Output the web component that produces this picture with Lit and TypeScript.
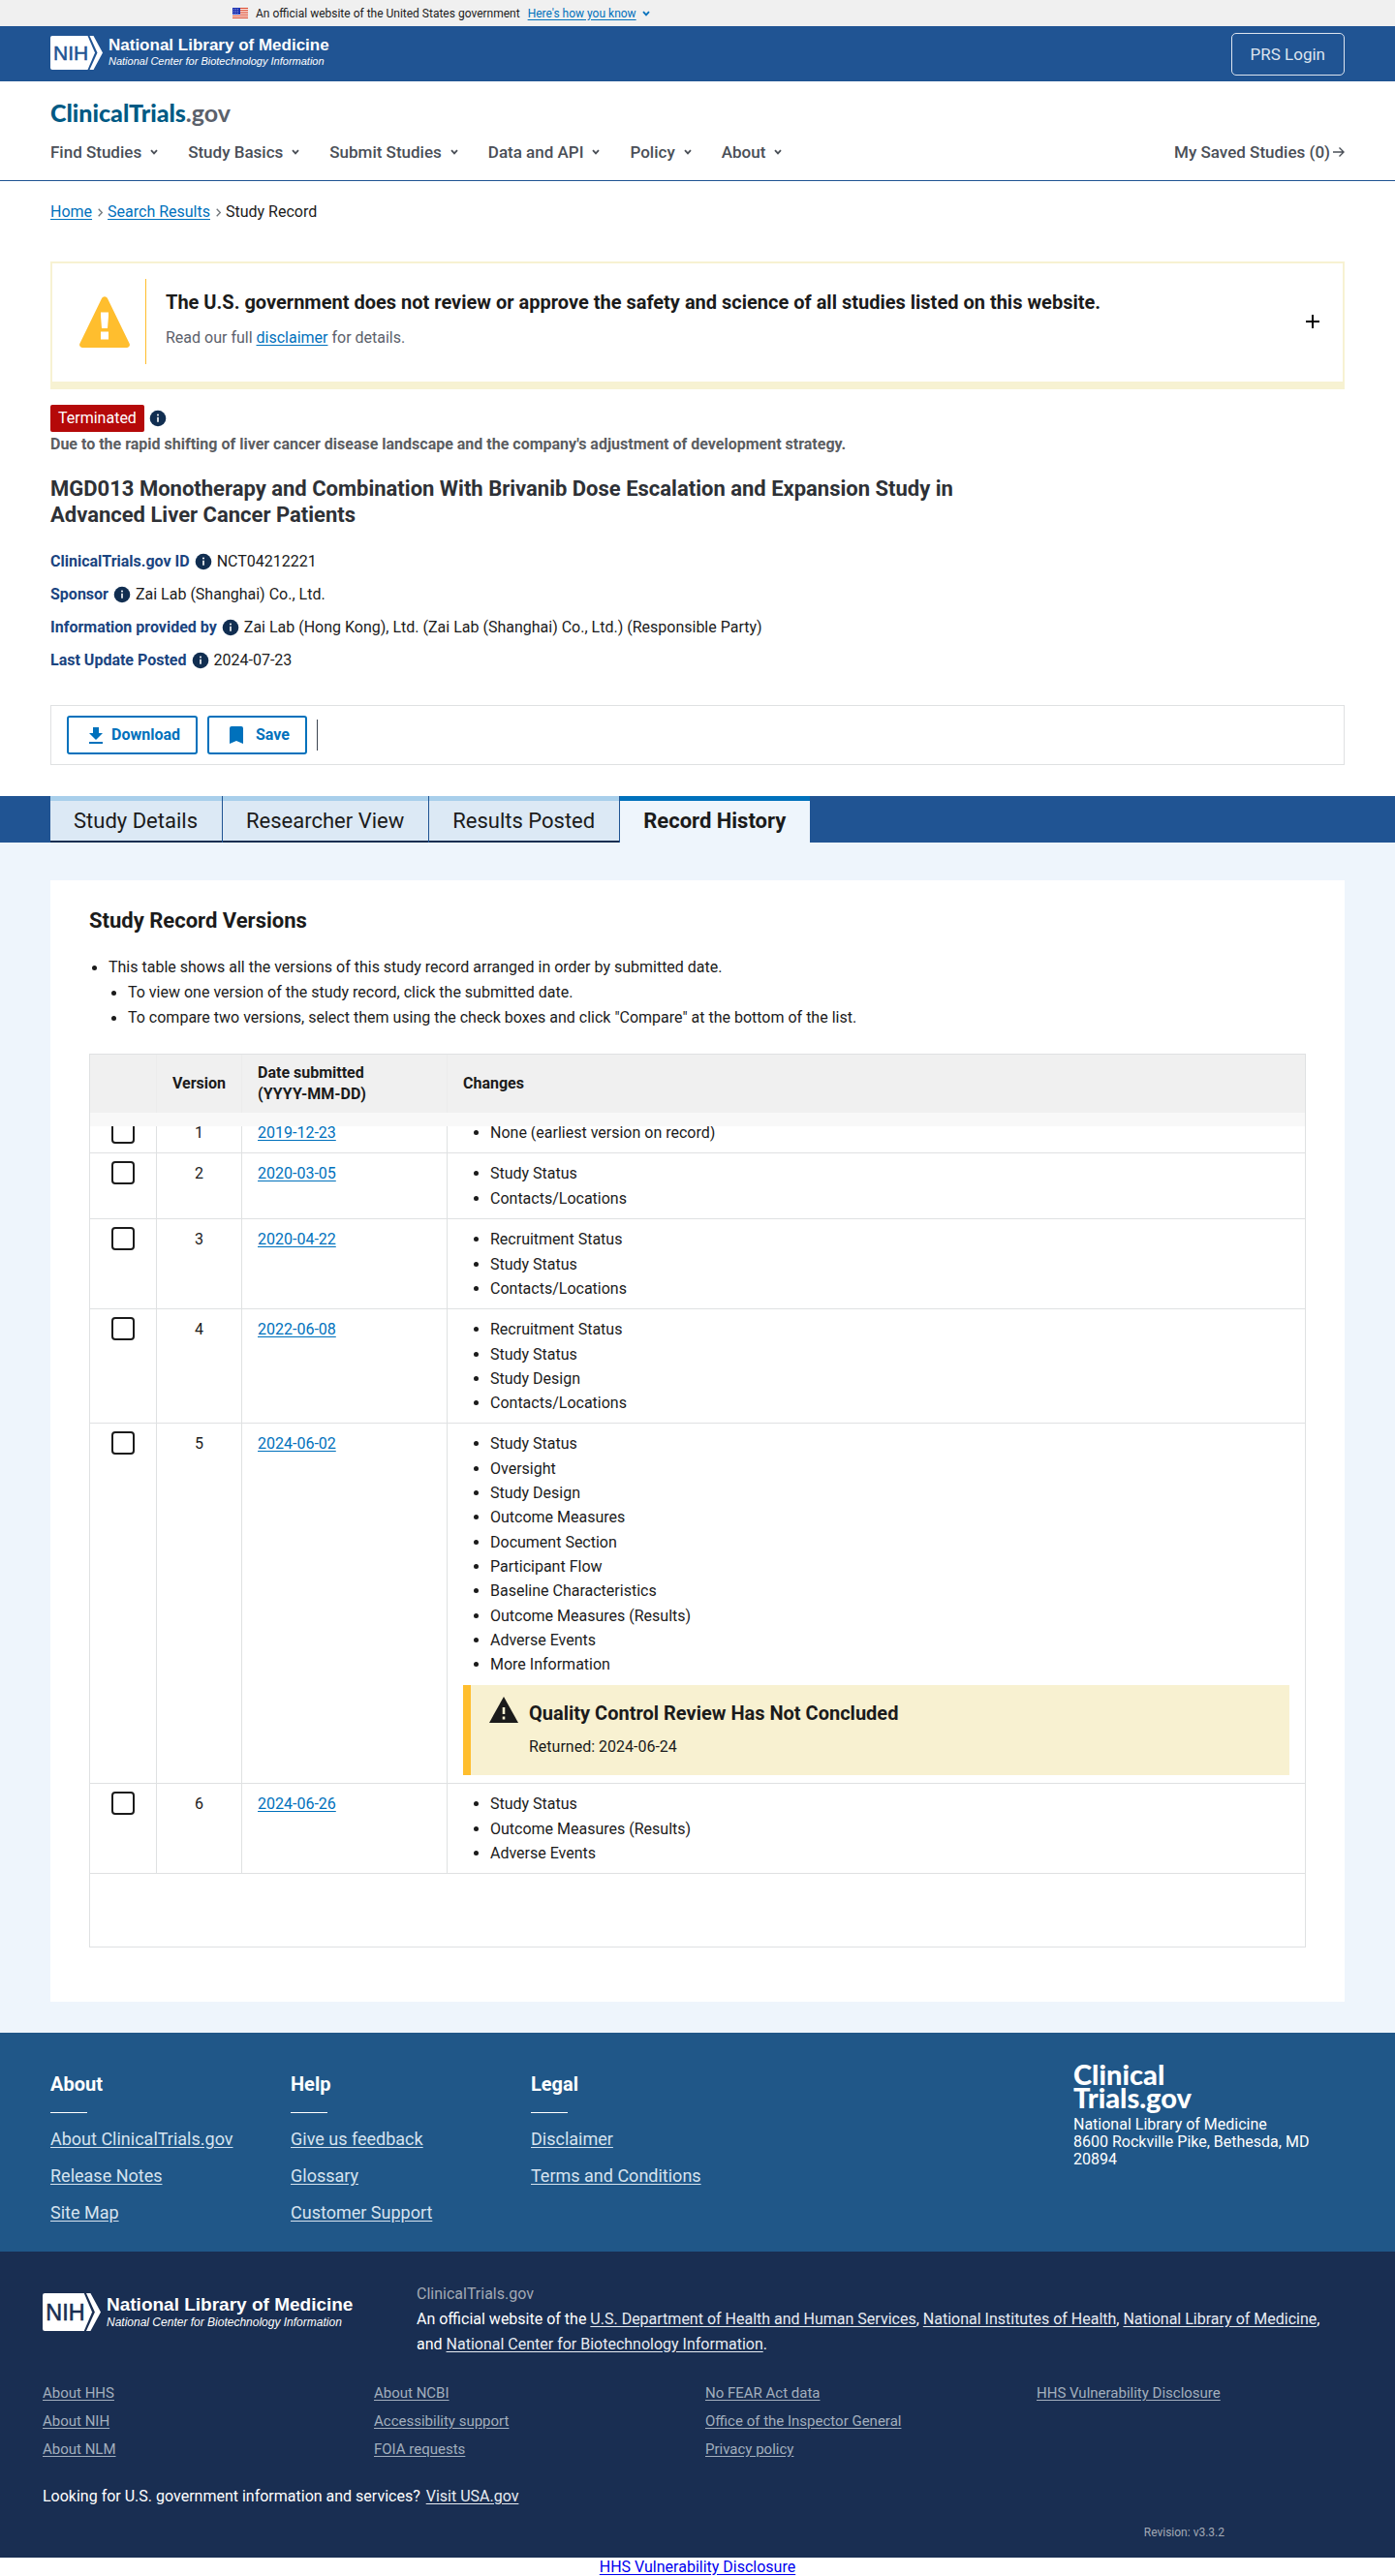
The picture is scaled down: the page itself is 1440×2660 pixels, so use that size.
import { LitElement, html, css, svg, nothing } from "lit";
import { customElement, property } from "lit/decorators.js";

interface Version {
  id: number;
  date: string;
  changes: string[];
  returned?: string;
}

const versions: Version[] = [
  { id: 1, date: "2019-12-23", changes: ["None (earliest version on record)"] },
  { id: 2, date: "2020-03-05", changes: ["Study Status", "Contacts/Locations"] },
  { id: 3, date: "2020-04-22", changes: ["Recruitment Status", "Study Status", "Contacts/Locations"] },
  {
    id: 4,
    date: "2022-06-08",
    changes: ["Recruitment Status", "Study Status", "Study Design", "Contacts/Locations"],
  },
  {
    id: 5,
    date: "2024-06-02",
    changes: [
      "Study Status",
      "Oversight",
      "Study Design",
      "Outcome Measures",
      "Document Section",
      "Participant Flow",
      "Baseline Characteristics",
      "Outcome Measures (Results)",
      "Adverse Events",
      "More Information",
    ],
    returned: "2024-06-24",
  },
  { id: 6, date: "2024-06-26", changes: ["Study Status", "Outcome Measures (Results)", "Adverse Events"] },
];

const navItems = ["Find Studies", "Study Basics", "Submit Studies", "Data and API", "Policy", "About"];
const tabs = ["Study Details", "Researcher View", "Results Posted", "Record History"];

const facts = [
  ["ClinicalTrials.gov ID", "NCT04212221"],
  ["Sponsor", "Zai Lab (Shanghai) Co., Ltd."],
  ["Information provided by", "Zai Lab (Hong Kong), Ltd. (Zai Lab (Shanghai) Co., Ltd.) (Responsible Party)"],
  ["Last Update Posted", "2024-07-23"],
];

const footerColumns = [
  { title: "About", links: ["About ClinicalTrials.gov", "Release Notes", "Site Map"] },
  { title: "Help", links: ["Give us feedback", "Glossary", "Customer Support"] },
  { title: "Legal", links: ["Disclaimer", "Terms and Conditions"] },
];

const agencyLinks = [
  ["About HHS", "About NIH", "About NLM"],
  ["About NCBI", "Accessibility support", "FOIA requests"],
  ["No FEAR Act data", "Office of the Inspector General", "Privacy policy"],
  ["HHS Vulnerability Disclosure"],
];

const chevron = html`<svg class="chevron" width="8" height="8" viewBox="0 0 8 8" aria-hidden="true">
  <path d="M1 2.2 4 5.4 7 2.2" fill="none" stroke="currentColor" stroke-width="1.8" />
</svg>`;

const flag = html`<svg class="flag" width="16" height="11" viewBox="0 0 16 11" aria-hidden="true">
  <rect width="16" height="11" fill="#fff" />
  ${[0, 2, 4, 6, 8, 10].map((y) => svg`<rect y=${y} width="16" height="1" fill="#db3e1f" />`)}
  <rect width="8" height="7" fill="#1e33b1" />
  <path d="M1 1.5h6M1 3.5h6M1 5.5h6" stroke="#8f9be0" stroke-width="1" stroke-dasharray="1 1" />
</svg>`;

const infoIcon = html`<svg width="18" height="18" viewBox="0 0 18 18">
  <circle cx="9" cy="9" r="8.3" fill="#112e51" />
  <circle cx="9" cy="5.6" r="1" fill="#fff" />
  <path d="M9 7.8v5" stroke="#fff" stroke-width="1.6" />
</svg>`;

@customElement("nih-logo")
export class NihLogo extends LitElement {
  @property({ reflect: true }) size = "small";

  static styles = css`
    :host {
      display: block;
    }
    .logo {
      display: flex;
      gap: 6px;
      color: #fff;
      text-decoration: none;
      font-family: "Liberation Sans", Arial, sans-serif;
    }
    .mark {
      display: block;
      flex: none;
      width: 54px;
      height: 35px;
    }
    .mark text {
      font: 21px "Liberation Sans", Arial, sans-serif;
    }
    .words {
      display: flex;
      flex-direction: column;
      justify-content: center;
      white-space: nowrap;
    }
    .name {
      font-size: 17px;
      line-height: 18px;
      font-weight: 700;
    }
    .center {
      font-size: 11px;
      line-height: 14px;
      font-style: italic;
    }
    :host([size="large"]) .mark {
      width: 60px;
      height: 39px;
    }
    :host([size="large"]) .name {
      font-size: 19px;
      line-height: 20px;
    }
    :host([size="large"]) .center {
      font-size: 12px;
      line-height: 16px;
    }
  `;

  render() {
    const ink = this.size === "large" ? "#192e52" : "#205493";
    return html`<a class="logo" href="#">
      <svg class="mark" viewBox="0 0 54 35" aria-hidden="true">
        <path d="M2 0H38.5L46 17.5 38.5 35H2a2 2 0 0 1-2-2V2a2 2 0 0 1 2-2Z" fill="#fff" />
        <path d="M40.5 0h4L54 17.5 44.5 35h-4L48.5 17.5Z" fill="#fff" />
        <text x="3" y="25" stroke=${ink} stroke-width=".5" fill=${ink}>NIH</text>
      </svg>
      <span class="words">
        <span class="name">National Library of Medicine</span>
        <span class="center">National Center for Biotechnology Information</span>
      </span>
    </a>`;
  }
}

@customElement("app-root")
export class AppRoot extends LitElement {
  static styles = css`
    :host {
      display: block;
      background: #fff;
      color: #1b1b1b;
      font-family: Roboto, "Liberation Sans", sans-serif;
      font-size: 16px;
      line-height: 24px;
    }
    * {
      box-sizing: border-box;
    }
    h1,
    h2,
    h3,
    p,
    ul,
    ol,
    dl,
    dd {
      margin: 0;
      padding: 0;
    }
    ul,
    ol {
      list-style: none;
    }
    a {
      color: #0071bc;
      text-underline-offset: 2px;
    }
    button {
      font: inherit;
      color: inherit;
      background: none;
      border: 0;
      margin: 0;
      padding: 0;
      cursor: pointer;
    }
    svg {
      flex: none;
    }

    .gov-banner {
      background: #f0f0f0;
      padding: 0 240px;
      height: 27px;
      display: flex;
      align-items: center;
      gap: 8px;
      font-size: 12px;
      line-height: 16px;
    }
    .gov-banner button {
      display: flex;
      align-items: center;
      gap: 6px;
      color: #0071bc;
    }
    .gov-banner button span {
      text-decoration: underline;
      text-underline-offset: 2px;
    }

    .nlm-bar {
      background: #205493;
      height: 57px;
      padding: 0 52px;
      display: flex;
      align-items: center;
      justify-content: space-between;
    }
    .nlm-bar nih-logo {
      padding-bottom: 3px;
    }
    .login {
      border: 1px solid #dce4ef;
      border-radius: 5px;
      color: #dce4ef;
      text-decoration: none;
      padding: 9px 19px;
      font-size: 17px;
    }

    .site-header {
      padding: 16px 52px 17px;
      border-bottom: 1px solid #205493;
      display: flex;
      flex-direction: column;
      gap: 13px;
    }
    .brand {
      font-family: Lato, sans-serif;
      font-size: 25px;
      line-height: 32px;
      font-weight: 900;
      color: #005a84;
      text-decoration: none;
    }
    .brand span {
      color: #5b616b;
      font-weight: 700;
    }
    .nav-row,
    .nav {
      display: flex;
    }
    .nav-row {
      justify-content: space-between;
    }
    .nav {
      gap: 31px;
    }
    .nav button {
      display: flex;
      align-items: center;
      gap: 9px;
      font-size: 17px;
      font-weight: 500;
      color: #4a4f57;
    }
    .saved {
      display: flex;
      align-items: center;
      gap: 3px;
      font-size: 17px;
      font-weight: 500;
      color: #4a4f57;
      text-decoration: none;
    }

    .record {
      padding: 20px 52px 32px;
    }
    .crumbs {
      display: flex;
      align-items: center;
      gap: 5px;
      margin-bottom: 39px;
    }
    .crumbs li {
      display: flex;
      align-items: center;
      gap: 6px;
    }

    .alert {
      border: 2px solid #f7f2d2;
      border-bottom: 8px solid #f7f2d2;
      padding: 16px 24px 18px 28px;
      display: flex;
      align-items: center;
      margin-bottom: 16px;
    }
    .alert-body {
      border-left: 1px solid #ffbe2e;
      margin-left: 16px;
      padding: 8px 20px 15px;
      flex: 1;
      display: flex;
      flex-direction: column;
      gap: 9px;
    }
    .alert button {
      padding-top: 4px;
    }
    .alert-title {
      font-size: 20px;
      line-height: 32px;
      font-weight: 700;
    }
    .alert-text {
      color: #5b616b;
    }

    .status {
      display: flex;
      align-items: center;
      gap: 5px;
      margin-bottom: 1px;
    }
    .badge {
      background: #b50909;
      color: #fff;
      border-radius: 2px;
      line-height: 28px;
      padding: 0 8px;
    }
    .reason {
      color: #5b5d61;
      font-weight: 700;
      margin-bottom: 20px;
    }
    .title {
      font-size: 22px;
      line-height: 27px;
      font-weight: 700;
      color: #2e3136;
      max-width: 960px;
      margin-bottom: 23px;
    }
    .facts {
      display: flex;
      flex-direction: column;
      gap: 10px;
      margin-bottom: 34px;
    }
    .fact {
      display: flex;
      gap: 5px;
      align-items: center;
    }
    .fact dt {
      display: flex;
      align-items: center;
      gap: 5px;
      font-weight: 700;
      color: #1a4480;
    }
    .info {
      display: flex;
    }

    .toolbar {
      border: 1px solid #dfe1e2;
      padding: 10px 16px;
      display: flex;
      align-items: center;
      gap: 10px;
    }
    .action {
      height: 40px;
      border: 2px solid #0071bc;
      border-radius: 3px;
      padding: 0 16px;
      display: flex;
      align-items: center;
      gap: 4px;
      color: #0071bc;
      font-weight: 700;
    }
    .action.save {
      gap: 8px;
    }
    .bar {
      width: 1px;
      height: 32px;
      background: #3d4551;
    }

    .tabs {
      background: #205493;
      padding: 0 52px;
      display: flex;
      gap: 1px;
    }
    .tab {
      height: 48px;
      padding: 0 25px 0 24px;
      background: #dce9f5;
      border-top: 5px solid #a8cfeb;
      border-bottom: 2px solid #112e51;
      font-size: 22px;
    }
    .tab.current {
      background: #eef5fc;
      border-top-color: #0071bc;
      border-bottom-color: #eef5fc;
      font-weight: 700;
    }

    .history {
      background: #eef5fc;
      padding: 39px 52px 32px;
    }
    .panel {
      background: #fff;
      padding: 27px 40px 56px;
    }
    .panel-title {
      font-size: 22px;
      line-height: 30px;
      font-weight: 700;
      margin-bottom: 20px;
    }
    .notes {
      line-height: 26px;
      margin-bottom: 24px;
    }
    .notes ul {
      padding-left: 20px;
    }
    .dot {
      display: flex;
      align-items: center;
      gap: 12px;
      padding-left: 3px;
    }
    .dot::before {
      content: "";
      width: 5px;
      height: 5px;
      border-radius: 50%;
      background: #1b1b1b;
    }

    .table-box {
      border: 1px solid #dfe1e2;
      padding-bottom: 75px;
    }
    table {
      width: 100%;
      border-collapse: separate;
      border-spacing: 0;
      table-layout: fixed;
    }
    .col-check {
      width: 69px;
    }
    .col-version {
      width: 88px;
    }
    .col-date {
      width: 212px;
    }
    th {
      position: relative;
      background: #f0f0f0;
      border-right: 1px solid #ececec;
      height: 60px;
      padding: 0 16px;
      font-weight: 700;
      line-height: 22px;
      text-align: left;
      vertical-align: middle;
    }
    th::after {
      content: "";
      position: absolute;
      left: 0;
      right: -1px;
      top: 100%;
      height: 14px;
      background: #f8f8f8;
    }
    th:last-child::after {
      right: 0;
    }
    td {
      border-right: 1px solid #dfe1e2;
      border-bottom: 1px solid #dfe1e2;
      padding: 8px 16px;
      line-height: 25px;
      vertical-align: top;
    }
    th:last-child,
    td:last-child {
      border-right: 0;
    }
    .check {
      text-align: center;
      line-height: 0;
    }
    .center {
      text-align: center;
    }
    .box {
      appearance: none;
      width: 24px;
      height: 24px;
      margin: 0;
      border: 2px solid #1b1b1b;
      border-radius: 4px;
      background: #fff;
    }
    .changes li {
      padding-left: 11px;
    }
    .changes li:nth-child(3n + 2) {
      margin-top: 1px;
    }
    .notice {
      margin-top: 9px;
      background: #f8f1d1;
      border-left: 8px solid #ffbe2e;
      padding: 12px 19px 11px;
      display: flex;
      gap: 11px;
    }
    .notice-title {
      font-size: 20px;
      line-height: 34px;
      font-weight: 700;
    }
    .notice-text {
      line-height: 36px;
    }

    .footer {
      background: #205788;
      color: #fff;
      padding: 31px 52px 28px;
      display: flex;
      justify-content: space-between;
    }
    .footer-cols {
      display: grid;
      grid-template-columns: repeat(3, 248px);
      padding-top: 10px;
    }
    .footer h3 {
      font-size: 20px;
      line-height: 24px;
      font-weight: 700;
    }
    .rule {
      width: 38px;
      height: 1px;
      background: #fff;
      margin: 17px 0 15px;
    }
    .footer ul {
      display: flex;
      flex-direction: column;
      gap: 14px;
      font-size: 18px;
    }
    .footer ul a {
      color: #d6e3ef;
    }
    .contact {
      width: 280px;
      line-height: 18px;
    }
    .stack {
      font-family: Lato, sans-serif;
      font-weight: 900;
      font-size: 29px;
      line-height: 24px;
      margin-bottom: 7px;
    }

    .agency {
      background: #192e52;
      color: #fff;
      padding: 31px 44px 18px;
    }
    .agency-top {
      display: flex;
      line-height: 26px;
      margin-bottom: 27px;
    }
    .agency-logo {
      width: 386px;
      padding-top: 12px;
      flex: none;
    }
    .agency-text {
      padding-right: 20px;
    }
    .muted {
      color: #a2a9b4;
    }
    .agency-top a,
    .usa a {
      color: #e8ecf2;
    }
    .agency-grid {
      display: grid;
      grid-template-columns: repeat(4, 1fr);
      column-gap: 16px;
      font-size: 15px;
      line-height: 20px;
      margin-bottom: 27px;
    }
    .agency-grid ul {
      display: flex;
      flex-direction: column;
      gap: 9px;
    }
    .agency-grid a {
      color: #a2aebd;
    }
    .usa {
      margin-bottom: 17px;
    }
    .usa a {
      margin-left: 2px;
    }
    .revision {
      color: #a2a9b4;
      font-size: 12px;
      line-height: 16px;
      text-align: right;
      padding-right: 132px;
    }
    .disclosure {
      text-align: center;
      line-height: 19px;
    }
    .disclosure a {
      color: #0000ee;
    }
  `;

  private renderVersion(v: Version) {
    return html`<tr>
      <td class="check">
        <input class="box" type="checkbox" aria-label=${`Select version ${v.id}`} />
      </td>
      <td class="center">${v.id}</td>
      <td><a href="#">${v.date}</a></td>
      <td>
        <ul class="changes">
          ${v.changes.map((c) => html`<li class="dot">${c}</li>`)}
        </ul>
        ${v.returned
          ? html`<div class="notice">
              <svg width="30" height="27" viewBox="0 0 30 27" aria-hidden="true">
                <path d="M15 0 30 27H0Z" fill="#1b1b1b" />
                <path d="M15 11v7M15 20.5v3" stroke="#f8f1d1" stroke-width="2.6" />
              </svg>
              <div>
                <h3 class="notice-title">Quality Control Review Has Not Concluded</h3>
                <p class="notice-text">Returned: ${v.returned}</p>
              </div>
            </div>`
          : nothing}
      </td>
    </tr>`;
  }

  render() {
    return html`
      <div class="gov-banner">
        ${flag}
        <span>An official website of the United States government</span>
        <button type="button"><span>Here's how you know</span>${chevron}</button>
      </div>

      <div class="nlm-bar">
        <nih-logo></nih-logo>
        <a class="login" href="#">PRS Login</a>
      </div>

      <header class="site-header">
        <a class="brand" href="#">ClinicalTrials<span>.gov</span></a>
        <div class="nav-row">
          <nav class="nav">
            ${navItems.map((n) => html`<button type="button">${n}${chevron}</button>`)}
          </nav>
          <a class="saved" href="#"
            >My Saved Studies (0)
            <svg width="12" height="12" viewBox="0 0 12 12" aria-hidden="true">
              <path d="M0 6h11M6.5 1.5 11 6l-4.5 4.5" fill="none" stroke="currentColor" stroke-width="1.4" />
            </svg>
          </a>
        </div>
      </header>

      <section class="record">
        <ol class="crumbs">
          ${["Home", "Search Results"].map(
            (c) => html`<li>
              <a href="#">${c}</a>
              <svg width="5" height="9" viewBox="0 0 5 9" aria-hidden="true">
                <path d="M.7.7 4.3 4.5.7 8.3" fill="none" stroke="#71767a" stroke-width="1.3" />
              </svg>
            </li>`,
          )}
          <li>Study Record</li>
        </ol>

        <div class="alert">
          <svg width="52" height="53" viewBox="0 0 52 53" aria-hidden="true">
            <path
              d="M23.2 1.8a3.2 3.2 0 0 1 5.6 0L51.5 48.5a3 3 0 0 1-2.7 4.5H3.2a3 3 0 0 1-2.7-4.5Z"
              fill="#ffbe2e"
            />
            <path d="M22 16.500h8v4l-1 12.500h-6l-1-12.500ZM22 36.500h8v8h-8Z" fill="#fff" />
          </svg>
          <div class="alert-body">
            <h2 class="alert-title">
              The U.S. government does not review or approve the safety and science of all studies listed on this website.
            </h2>
            <p class="alert-text">Read our full <a href="#">disclaimer</a> for details.</p>
          </div>
          <button type="button" aria-label="Expand">
            <svg width="14" height="14" viewBox="0 0 14 14" aria-hidden="true">
              <path d="M7 0v14M0 7h14" stroke="#000" stroke-width="2" />
            </svg>
          </button>
        </div>

        <div class="status">
          <span class="badge">Terminated</span>
          <button class="info" type="button" aria-label="About this status">${infoIcon}</button>
        </div>
        <p class="reason">
          Due to the rapid shifting of liver cancer disease landscape and the company's adjustment of development strategy.
        </p>
        <h1 class="title">
          MGD013 Monotherapy and Combination With Brivanib Dose Escalation and Expansion Study in Advanced Liver Cancer
          Patients
        </h1>
        <dl class="facts">
          ${facts.map(
            ([label, value]) => html`<div class="fact">
              <dt>
                ${label}
                <button class="info" type="button" aria-label=${`About ${label}`}>${infoIcon}</button>
              </dt>
              <dd>${value}</dd>
            </div>`,
          )}
        </dl>
        <div class="toolbar">
          <button class="action" type="button">
            <svg width="24" height="24" viewBox="0 0 24 24" fill="currentColor" aria-hidden="true">
              <path d="M19 10h-4V4H9v6H5l7 7ZM5 19v2h14v-2Z" />
            </svg>
            Download
          </button>
          <button class="action save" type="button">
            <svg width="24" height="24" viewBox="0 0 24 24" fill="currentColor" aria-hidden="true">
              <path d="M17 3H7a2 2 0 0 0-2 2v16l7-3 7 3V5a2 2 0 0 0-2-2Z" />
            </svg>
            Save
          </button>
          <span class="bar"></span>
        </div>
      </section>

      <div class="tabs" role="tablist">
        ${tabs.map(
          (t, i) => html`<button
            class=${i === 3 ? "tab current" : "tab"}
            type="button"
            role="tab"
            aria-selected=${i === 3 ? "true" : "false"}
          >
            ${t}
          </button>`,
        )}
      </div>

      <section class="history">
        <div class="panel">
          <h2 class="panel-title">Study Record Versions</h2>
          <div class="notes">
            <p class="dot">This table shows all the versions of this study record arranged in order by submitted date.</p>
            <ul>
              <li class="dot">To view one version of the study record, click the submitted date.</li>
              <li class="dot">
                To compare two versions, select them using the check boxes and click "Compare" at the bottom of the list.
              </li>
            </ul>
          </div>
          <div class="table-box">
            <table>
              <colgroup>
                <col class="col-check" />
                <col class="col-version" />
                <col class="col-date" />
                <col />
              </colgroup>
              <thead>
                <tr>
                  <th aria-label="Select"></th>
                  <th>Version</th>
                  <th>Date submitted<br />(YYYY-MM-DD)</th>
                  <th>Changes</th>
                </tr>
              </thead>
              <tbody>
                ${versions.map((v) => this.renderVersion(v))}
              </tbody>
            </table>
          </div>
        </div>
      </section>

      <footer>
        <div class="footer">
          <div class="footer-cols">
            ${footerColumns.map(
              (col) => html`<div>
                <h3>${col.title}</h3>
                <div class="rule"></div>
                <ul>
                  ${col.links.map((l) => html`<li><a href="#">${l}</a></li>`)}
                </ul>
              </div>`,
            )}
          </div>
          <div class="contact">
            <div class="stack">Clinical<br />Trials.gov</div>
            <p>National Library of Medicine</p>
            <p>8600 Rockville Pike, Bethesda, MD 20894</p>
          </div>
        </div>

        <div class="agency">
          <div class="agency-top">
            <div class="agency-logo"><nih-logo size="large"></nih-logo></div>
            <div class="agency-text">
              <p class="muted">ClinicalTrials.gov</p>
              <p>
                An official website of the <a href="#">U.S. Department of Health and Human Services</a>,
                <a href="#">National Institutes of Health</a>, <a href="#">National Library of Medicine</a>, and
                <a href="#">National Center for Biotechnology Information</a>.
              </p>
            </div>
          </div>
          <div class="agency-grid">
            ${agencyLinks.map(
              (col) => html`<ul>
                ${col.map((l) => html`<li><a href="#">${l}</a></li>`)}
              </ul>`,
            )}
          </div>
          <p class="usa">Looking for U.S. government information and services? <a href="#">Visit USA.gov</a></p>
          <p class="revision">Revision: v3.3.2</p>
        </div>
        <div class="disclosure"><a href="#">HHS Vulnerability Disclosure</a></div>
      </footer>
    `;
  }
}
